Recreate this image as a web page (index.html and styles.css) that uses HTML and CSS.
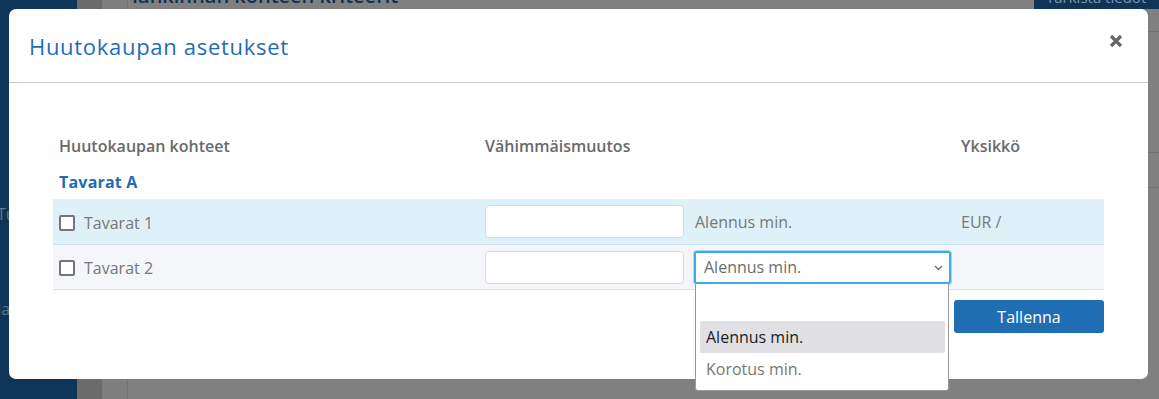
FILE: index.html
```html
<!DOCTYPE html>
<html lang="fi">
<head>
<meta charset="utf-8">
<title>Huutokaupan asetukset</title>
<link rel="stylesheet" href="styles.css">
</head>
<body>
<div class="page">
  <aside class="sidebar">
    <span class="side-item side-t">Tu</span>
    <span class="side-item side-j">Ja</span>
  </aside>
  <div class="strip-a"></div>
  <div class="strip-b"></div>
  <main class="content">
    <div class="topbar">
      <span class="page-title">Hankinnan kohteen kriteerit</span>
      <span class="check-btn">Tarkista tiedot</span>
    </div>
    <div class="content-lines">
      <div class="cl cl1"></div>
      <div class="cl cl2"></div>
      <div class="cl cl3"></div>
    </div>
  </main>
</div>

<div class="modal">
  <header class="modal-header">
    <h1 class="modal-title">Huutokaupan asetukset</h1>
    <button class="close" aria-label="Sulje">
      <svg width="14" height="14" viewBox="0 0 14 14"><path d="M2 2 L12 12 M12 2 L2 12" stroke="#666" stroke-width="3.2" stroke-linecap="butt"/></svg>
    </button>
  </header>
  <section class="modal-body">
    <div class="grid head">
      <div class="cell">Huutokaupan kohteet</div>
      <div class="cell">Vähimmäismuutos</div>
      <div class="cell">Yksikkö</div>
    </div>
    <div class="group">Tavarat A</div>
    <div class="grid row row1">
      <div class="cell item"><span class="cb"></span>Tavarat 1</div>
      <div class="cell change"><span class="input"></span><span class="mode">Alennus min.</span></div>
      <div class="cell">EUR /</div>
    </div>
    <div class="grid row row2">
      <div class="cell item"><span class="cb"></span>Tavarat 2</div>
      <div class="cell change">
        <span class="input"></span>
        <span class="select">Alennus min.
          <svg class="chev" width="9" height="6" viewBox="0 0 9 6"><path d="M1 1 L4.5 4.5 L8 1" fill="none" stroke="#666" stroke-width="1.3"/></svg>
        </span>
      </div>
      <div class="cell"></div>
    </div>
    <div class="actions">
      <button class="save">Tallenna</button>
    </div>
  </section>
</div>

<div class="dropdown">
  <div class="opt empty"></div>
  <div class="opt selected">Alennus min.</div>
  <div class="opt">Korotus min.</div>
</div>
</body>
</html>
```

FILE: styles.css
```css
html, body {
  margin: 0;
  padding: 0;
}
body {
  width: 1159px;
  height: 399px;
  overflow: hidden;
  background: #808080;
  font-family: "Open Sans", "Noto Sans", sans-serif;
  position: relative;
}
.page {
  display: flex;
  height: 399px;
}
.sidebar {
  width: 77px;
  background: #0e3457;
  position: relative;
  flex: none;
}
.side-item {
  position: absolute;
  left: -3px;
  color: #5f7790;
  font-size: 16px;
}
.side-t { top: 203px; }
.side-j { top: 298px; }
.strip-a {
  width: 25px;
  background: #6b6b6b;
  flex: none;
}
.strip-b {
  width: 25px;
  background: #7e7e7e;
  border-right: 1px solid #717171;
  flex: none;
}
.content {
  flex: 1;
  position: relative;
}
.topbar {
  display: flex;
  justify-content: space-between;
  height: 9px;
  overflow: hidden;
}
.page-title {
  margin-left: -5px;
  margin-top: -16px;
  font-size: 20px;
  font-weight: 600;
  color: #10304f;
  line-height: 24px;
}
.check-btn {
  background: #0e3457;
  color: #7d95ad;
  width: 113px;
  padding-left: 12px;
  margin-top: -14px;
  font-size: 15px;
  line-height: 22px;
}
.content-lines .cl {
  position: absolute;
  right: 0;
  width: 20px;
  height: 1px;
  background: #717171;
}
.cl1 { top: 31px; }
.cl2 { top: 152px; }
.cl3 { top: 187px; }

.modal {
  position: absolute;
  left: 9px;
  top: 9px;
  width: 1139px;
  height: 370px;
  background: #fff;
  border-radius: 7px;
}
.modal-header {
  height: 73px;
  border-bottom: 1px solid #c9c9c9;
  display: flex;
  align-items: center;
  justify-content: space-between;
  padding: 0 25px 0 20px;
}
.modal-title {
  margin: 0;
  font-size: 22px;
  font-weight: 500;
  color: #1d6db5;
  letter-spacing: 0.7px;
}
.close {
  border: 0;
  background: none;
  padding: 0;
  width: 14px;
  height: 14px;
  align-self: flex-start;
  margin-top: 25px;
  display: flex;
}
.modal-body {
  padding: 47px 44px 0 44px;
}
.grid {
  display: grid;
  grid-template-columns: 426px 476px 1fr;
  align-items: center;
}
.cell {
  padding: 0 6px;
}
.head {
  height: 32px;
  font-size: 16px;
  font-weight: 600;
  color: #6a6a6a;
}
.group {
  padding: 0 6px;
  height: 34px;
  line-height: 40px;
  font-size: 16px;
  font-weight: 700;
  letter-spacing: 0.2px;
  color: #1d6db5;
}
.row {
  height: 45px;
  font-size: 16px;
  color: #777;
  border-bottom: 1px solid #dde3ea;
}
.row1 {
  margin-top: 3px;
  background: #dff1f8;
  border-bottom-color: #c9e3ee;
}
.row2 {
  height: 44px;
  background: #f4f6f9;
}
.item {
  display: flex;
  align-items: center;
  padding-top: 2px;
}
.cb {
  width: 12px;
  height: 12px;
  border: 2px solid #757575;
  border-radius: 2px;
  margin-right: 9px;
  background: #fff;
}
.change {
  display: flex;
  align-items: center;
  gap: 11px;
}
.input {
  width: 197px;
  height: 31px;
  border: 1px solid #dadada;
  border-radius: 4px;
  background: #fff;
  flex: none;
}
.mode {
  padding-top: 1px;
}
.select {
  width: 245px;
  height: 29px;
  border: 2px solid #3aaee4;
  box-shadow: 0 0 0 1px #a8d7f0;
  border-radius: 3px;
  background: #fff;
  padding: 0 0 0 8px;
  display: flex;
  align-items: center;
  justify-content: space-between;
  font-size: 16px;
  color: #6c6c6c;
  margin-left: -1px;
  box-sizing: content-box;
  flex: none;
}
.chev {
  margin-right: 6px;
  margin-top: 2px;
}
.actions {
  display: flex;
  justify-content: flex-end;
  margin-top: 10px;
}
.save {
  width: 150px;
  height: 33px;
  border: 0;
  border-radius: 3px;
  background: #1f6db3;
  color: #fff;
  font-family: "Open Sans", "Noto Sans", sans-serif;
  font-size: 16px;
  padding: 0;
}
.dropdown {
  position: absolute;
  left: 695px;
  top: 284px;
  width: 245px;
  height: 104px;
  border: 1px solid #9a9a9a;
  border-top: 0;
  border-radius: 0 0 3px 3px;
  background: #fff;
  padding: 2px 3px 0 4px;
  box-sizing: content-box;
  font-size: 16px;
}
.opt {
  height: 32px;
  line-height: 32px;
  padding-left: 6px;
  color: #777;
  border-radius: 2px;
}
.opt.empty {
  height: 35px;
}
.opt.selected {
  background: #e1e0e5;
  color: #1c1c1c;
}
```
